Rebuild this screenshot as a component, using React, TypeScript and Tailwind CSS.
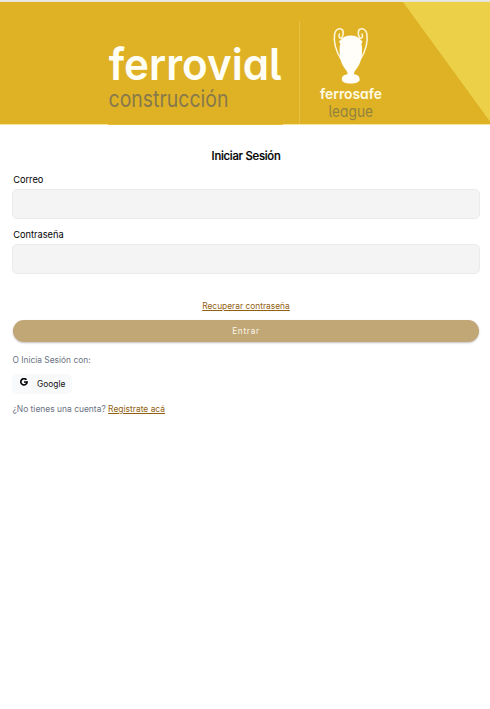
import React from "react";

function Banner() {
  return (
    <header className="h-[125px] w-full border-t border-[#e5e7eb] bg-[#dfb226]">
      <svg
        viewBox="0 1 490 124"
        className="block h-[124px] w-full font-[Inter,sans-serif] [font-feature-settings:'cv11','cv05']"
        role="img"
        aria-label="Ferrovial construcción, ferrosafe league"
      >
        <rect x="0" y="1" width="490" height="1" fill="#e9e4d0" />
        <path d="M403 2H490V121.500Z" fill="#ebd048" />
        <path d="M0 124.500H108M283 124.500H490" stroke="#f5e69a" />
        <path d="M108 124.500H283" stroke="#e4bd35" />
        <path d="M299.500 21V124" stroke="#e6c145" />
        <text x="108.700" y="79.900" fontSize="44" fontWeight="600" fill="#fffff5" textLength="173" lengthAdjust="spacingAndGlyphs">ferrovial</text>
        <text x="108.500" y="106.500" fontSize="23.500" fontWeight="400" fill="#87794a" textLength="120" lengthAdjust="spacingAndGlyphs">construcción</text>
        <g fill="none" stroke="#fff8dc" strokeWidth="1.500" strokeLinecap="round">
          <path d="M341.500 38.500C343 36 344.500 31 341.500 29.200C338.500 27.600 335.300 30 334.600 34C333.500 41 335.500 51 341 59" />
          <path d="M360 38.500C358.500 36 357 31 360 29.200C363 27.600 366.200 30 366.900 34C368 41 366 51 360.500 59" />
          <path d="M341.500 38.500C339 38.500 338.500 36 339.500 34M360 38.500C362.500 38.500 363 36 362 34" />
        </g>
        <path
          d="M341.500 39.500Q344 35.600 350.800 35.600Q357.500 35.600 360 39.500L362.500 41.300L361.300 44.500L362 46C362.300 54 361.800 59 359.200 64.500C356.500 69.500 354 71 354 74.200C357.500 74.500 359.700 76.300 359.700 79.500C359.700 82 356 83.500 350.800 83.500C345.500 83.500 341.800 82 341.800 79.500C341.800 76.300 344 74.500 347.600 74.200C347.600 71 345 69.500 342.300 64.500C339.900 59 339.400 54 339.700 46L340.400 44.500L339 41.300Z"
          fill="#fffef8"
        />
        <text x="320" y="99.300" fontSize="14.500" fontWeight="600" fill="#fffbe5" textLength="62" lengthAdjust="spacingAndGlyphs">ferrosafe</text>
        <text x="328.500" y="116.800" fontSize="15.500" fontWeight="400" fill="#91823d" textLength="44.500" lengthAdjust="spacingAndGlyphs">league</text>
      </svg>
    </header>
  );
}

function Field({ label, type }: { label: string; type: string }) {
  return (
    <label className="block h-[55px]">
      <span className="block pl-[1.200px] text-[9.250px] leading-[14px]">{label}</span>
      <input
        type={type}
        className="mt-[2px] block h-[30px] w-[468px] rounded-[5px] border border-[#ebebeb] bg-[#f4f4f4] px-2 text-xs outline-none"
      />
    </label>
  );
}

function GoogleMark() {
  return (
    <svg viewBox="0 0 24 24" className="-mt-[3px] size-2" fill="none" stroke="#000" strokeWidth="4.800">
      <path d="M19.500 5.500A9.500 9.500 0 1 0 21.500 12H12" />
    </svg>
  );
}

export default function App() {
  return (
    <div className="h-[709px] w-full overflow-hidden bg-white font-[Inter,sans-serif] text-black">
      <Banner />
      <main className="px-3 pt-6">
        <h1 className="h-6 pl-[2px] text-center text-[11.300px] leading-[15px] font-medium tracking-[-0.250px] [-webkit-text-stroke:0.2px]">Iniciar Sesión</h1>
        <Field label="Correo" type="email" />
        <Field label="Contraseña" type="password" />
        <div className="mt-4 h-[21.300px] pl-[2px] text-center text-[8.400px] leading-[14px]">
          <a href="#" className="text-[#935f12] underline">Recuperar contraseña</a>
        </div>
        <button
          type="button"
          className="ml-px block h-[22px] w-[466px] rounded-full bg-[#c1a676] text-[8.300px] tracking-[0.700px] text-[#fbf6eb] shadow-[0_1px_2px_rgba(0,0,0,0.25)]"
        >
          Entrar
        </button>
        <p className="mt-[11.700px] pl-[0.500px] text-[8.400px] leading-[13px] text-gray-500">O Inicia Sesión con:</p>
        <button type="button" className="mt-[7px] flex h-5 w-[60px] items-center rounded-[5px] bg-[#f8f9fb] pl-2 text-[8.400px] text-[#111]">
          <GoogleMark />
          <span className="mt-px ml-[9px]">Google</span>
        </button>
        <p className="mt-[9px] pl-[0.500px] text-[8.450px] leading-[13px] text-gray-500">
          ¿No tienes una cuenta?{" "}
          <a href="#" className="text-[#935f12] underline">Registrate acá</a>
        </p>
      </main>
    </div>
  );
}
